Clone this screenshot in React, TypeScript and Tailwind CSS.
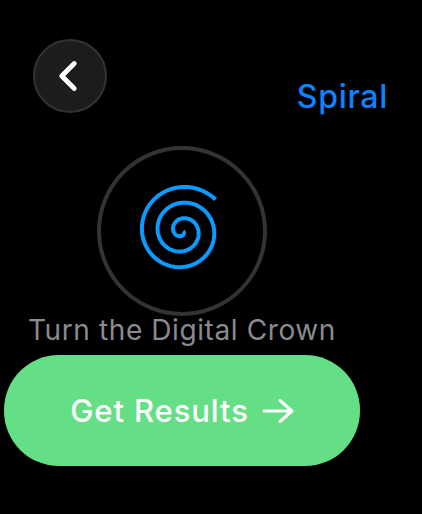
import { ChevronLeft } from "lucide-react";

// outward from the centre, clockwise on screen
function spiralPath() {
  const cx = 85;
  const cy = 85;
  const pitch = 15.7;
  const pts: string[] = [];
  for (let t = -0.72; t <= 2.13; t += 0.01) {
    const r = pitch * (0.8 + t);
    const a = t * 2 * Math.PI;
    pts.push(`${(cx + r * Math.sin(a)).toFixed(2)} ${(cy - r * Math.cos(a)).toFixed(2)}`);
  }
  return "M" + pts.join("L");
}

export default function App() {
  return (
    <div className="w-[422px] h-[514px] bg-black overflow-hidden font-['Inter',sans-serif]">
      <div className="flex items-start pt-[39px] pl-[33px] pr-[34px] justify-between">
        <button className="w-[74px] h-[74px] rounded-full bg-[#1c1c1e] border-2 border-[#333335] flex items-center justify-center text-white">
          <ChevronLeft size={50} strokeWidth={2.3} className="-ml-[5px] shrink-0" />
        </button>
        <span className="mt-[37px] text-[32px] leading-[42px] font-medium tracking-[0.7px] text-[#0a84ff]">Spiral</span>
      </div>
      <div className="ml-[97px] mt-[28px] w-[170px] h-[170px] rounded-full border-4 border-[#333335]">
        <svg width="170" height="170" viewBox="0 0 170 170" className="-m-1" fill="none">
          <path d={spiralPath()} stroke="#0a9bff" strokeWidth="4" strokeLinecap="butt" strokeLinejoin="round" />
        </svg>
      </div>
      <p className="ml-[28px] mt-[-3px] text-[28px] leading-[34px] text-[#8a8a90] tracking-[0.6px]">Turn the Digital Crown</p>
      <button className="ml-1 mt-[8px] w-[356px] h-[111px] rounded-[55px] bg-[#65df85] flex items-center justify-center gap-[13px] text-white">
        <span className="text-[31px] leading-[40px] font-medium tracking-[0.9px]">Get Results</span>
        <svg width="32" height="26" viewBox="0 0 32 26" fill="none" stroke="currentColor" strokeWidth="3" strokeLinecap="round" strokeLinejoin="round">
          <path d="M2 13H30M18 2.5L30 13L18 23.5" />
        </svg>
      </button>
    </div>
  );
}
